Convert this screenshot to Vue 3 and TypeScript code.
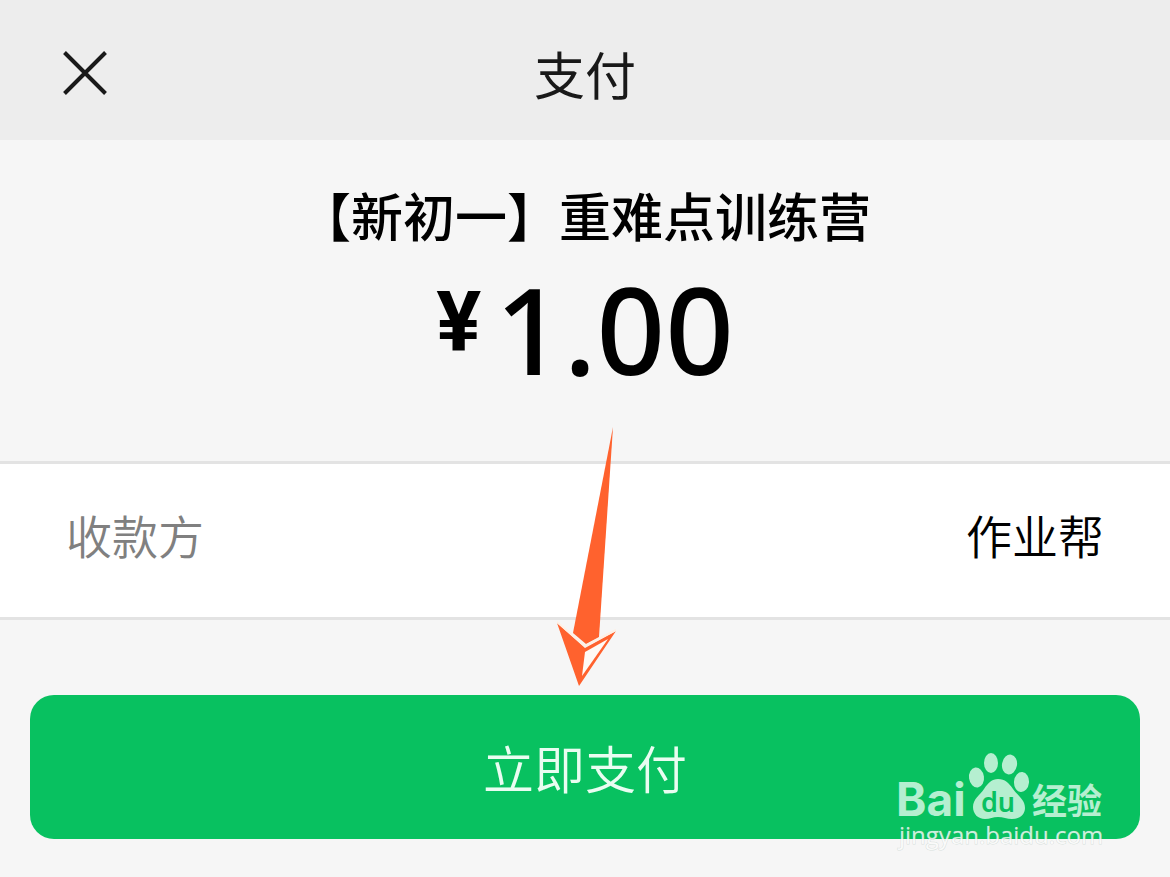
<script setup lang="ts">
interface Payment {
  title: string
  amount: string
  payee: string
}

const payment: Payment = {
  title: '【新初一】重难点训练营',
  amount: '1.00',
  payee: '作业帮',
}
</script>

<template>
  <div class="page">
    <header class="bar">
      <button class="close" type="button" aria-label="关闭">
        <svg width="44" height="44" viewBox="0 0 44 44" aria-hidden="true">
          <path d="M1.5 1.5 42.5 42.5M42.5 1.5 1.5 42.5" stroke="#191919" stroke-width="4" fill="none" />
        </svg>
      </button>
      <h1 class="bar-title">支付</h1>
    </header>

    <main>
      <section class="summary">
        <h2 class="product">{{ payment.title }}</h2>
        <p class="price"><span class="currency">¥</span><span>{{ payment.amount }}</span></p>
      </section>

      <dl class="row">
        <dt>收款方</dt>
        <dd>{{ payment.payee }}</dd>
      </dl>

      <div class="action">
        <button class="pay" type="button">立即支付</button>

        <svg class="arrow" width="60" height="262" viewBox="0 0 60 262" aria-hidden="true">
          <path d="M56 2 42 212 29 219 16 208Z" fill="#ff622e" />
          <path d="M0 198 28 223 59 206 22 261Z" fill="#ff622e" />
          <path d="M0 197 28 221 59 205" fill="none" stroke="#fff0e4" stroke-width="2" />
          <path d="M28 227 51 214 25 251Z" fill="#fffaf5" />
        </svg>

        <svg class="watermark" width="216" height="104" viewBox="0 0 216 104" aria-hidden="true">
          <g fill="#b5efd0">
            <text class="wm-bai" x="0" y="68">Bai</text>
            <ellipse cx="80.500" cy="29.500" rx="7.500" ry="10" transform="rotate(-8 80.500 29.500)" />
            <ellipse cx="95" cy="15" rx="7" ry="10" />
            <ellipse cx="113.500" cy="16.500" rx="7.500" ry="10" transform="rotate(10 113.500 16.500)" />
            <ellipse cx="125.500" cy="34" rx="7.500" ry="10" transform="rotate(5 125.500 34)" />
            <path d="M102 31C109 31 113 35 117 41C121 47 129 51 129 60C129 67 123 71 116 71C111 71 107 69 102 69C97 69 94 71 89 71C82 71 77 66 77 59C77 51 84 47 88 41C92 35 96 31 102 31Z" />
            <text class="wm-cn" x="136" y="66">经验</text>
          </g>
          <text class="wm-du" x="102" y="64" text-anchor="middle">du</text>
          <text class="wm-url" x="3" y="96">jingyan.baidu.com</text>
        </svg>
      </div>
    </main>
  </div>
</template>

<style>
body {
  background: #f6f6f6;
}
</style>

<style scoped>
.page {
  min-height: 100vh;
  background: #f6f6f6;
  color: #000;
  font-family: "Noto Sans CJK SC", sans-serif;
}

.bar {
  display: grid;
  grid-template-columns: 1fr auto 1fr;
  align-items: center;
  padding: 35px 63px 29px;
  background: #ededed;
}

.close {
  justify-self: start;
  padding: 0;
  border: 0;
  background: none;
  line-height: 0;
}

.bar-title {
  margin: 0;
  color: #191919;
  font-size: 51px;
  font-weight: 400;
  line-height: 76px;
}

.summary {
  padding: 37px 30px 60px;
  text-align: center;
}

.product {
  margin: 0 0 3px;
  font-size: 52px;
  font-weight: 500;
  line-height: 76px;
}

.price {
  display: flex;
  justify-content: center;
  align-items: flex-start;
  gap: 14px;
  margin: 0;
  font-family: "Noto Sans", sans-serif;
  font-size: 120px;
  font-weight: 500;
  line-height: 145px;
}

.currency {
  font-family: Roboto, sans-serif;
  font-size: 84px;
  font-weight: 700;
  line-height: 134px;
}

.row {
  display: flex;
  justify-content: space-between;
  margin: 0;
  padding: 36px 66px 49px;
  border: solid #e3e3e3;
  border-width: 3px 0;
  background: #fff;
  font-size: 46px;
  font-weight: 350;
  line-height: 68px;
}

.row dt {
  color: #808080;
}

.row dd {
  margin: 0;
}

.action {
  position: relative;
  padding: 75px 30px 38px;
}

.pay {
  display: block;
  width: 100%;
  padding: 34px 0;
  border: 0;
  border-radius: 24px;
  background: #08c160;
  color: #e9fdf1;
  font-family: inherit;
  font-size: 51px;
  font-weight: 350;
  line-height: 76px;
}

.arrow {
  position: absolute;
  left: calc(50% - 28px);
  bottom: 190px;
}

.watermark {
  position: absolute;
  right: 58px;
  bottom: 25px;
  overflow: visible;
}

.wm-bai {
  font: 700 46px Inter, sans-serif;
}

.wm-cn {
  font: 700 35px "Noto Sans CJK SC", sans-serif;
}

.wm-du {
  fill: #08c160;
  font: 600 27px "Noto Sans", sans-serif;
}

.wm-url {
  fill: #fff;
  fill-opacity: 0.8;
  stroke: #8fa89b;
  stroke-opacity: 0.3;
  stroke-width: 1px;
  paint-order: stroke;
  font: 400 24px "Open Sans", sans-serif;
}
</style>
